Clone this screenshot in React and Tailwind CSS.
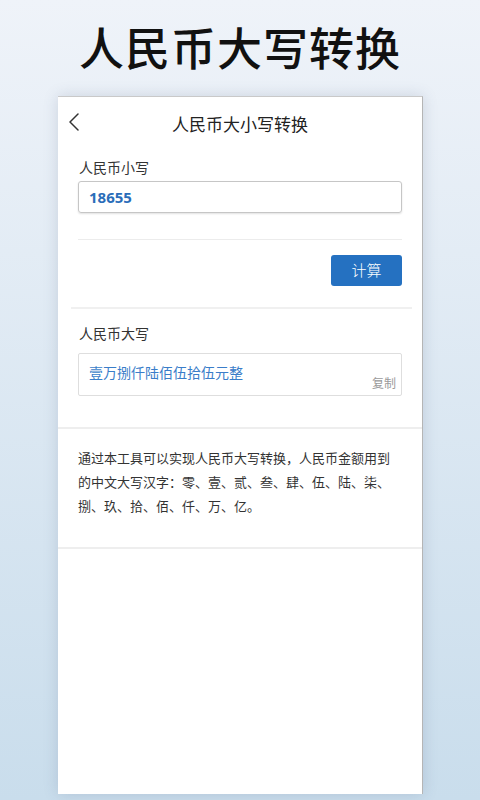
import React from "react";

const font = { fontFamily: '"Noto Sans CJK SC", "Noto Sans", sans-serif' };

export default function App() {
  return (
    <div
      className="w-[480px] h-[800px] overflow-hidden bg-gradient-to-b from-[#eff3f9] to-[#c9ddec] flex flex-col"
      style={font}
    >
      <div className="h-[96px] flex items-center justify-center">
        <h1 className="text-[45px] leading-none font-medium text-[#111] tracking-[1px] pb-[3px]">
          人民币大写转换
        </h1>
      </div>
      <div className="ml-[58px] w-[365px] h-[698px] bg-white border-t border-r border-t-[#c9c9c9] border-r-[#b5b5b5] shadow-[0_0_14px_rgba(60,80,110,0.18)] flex flex-col">
        <div className="h-[54px] relative flex items-center justify-center">
          <svg
            className="absolute left-[10px] top-[16px]"
            width="12"
            height="18"
            viewBox="0 0 12 18"
            fill="none"
          >
            <path d="M10 1 L2 9 L10 17" stroke="#333" strokeWidth="1.5" strokeLinecap="round" strokeLinejoin="round" />
          </svg>
          <span className="text-[17px] text-[#222]">人民币大小写转换</span>
        </div>
        <div className="px-[20px] pt-[6px]">
          <div className="text-[14px] leading-[20px] text-[#333] pl-px">人民币小写</div>
          <div className="mt-[4px] h-[32px] border border-[#c6c6c6] rounded-[3px] shadow-[0_1px_2px_rgba(0,0,0,0.12)] flex items-center pl-[10px]">
            <span className="text-[15px] font-bold text-[#2a6db9]" style={{ fontFamily: '"Noto Sans", "Liberation Sans", sans-serif' }}>18655</span>
          </div>
          <div className="mt-[26px] h-[1px] bg-[#ececec]" />
          <div className="mt-[15px] flex justify-end">
            <div className="w-[71px] h-[31px] rounded-[3px] bg-[#2571c1] flex items-center justify-center text-white text-[15px] font-light">
              计算
            </div>
          </div>
        </div>
        <div className="mt-[21px] ml-[13px] mr-[10px] h-[2px] bg-[#f0f0f0]" />
        <div className="px-[20px] pt-[14px]">
          <div className="text-[14px] leading-[20px] text-[#333] pl-px">人民币大写</div>
          <div className="mt-[10px] h-[43px] border border-[#dedede] rounded-[2px] relative pl-[10px] pt-[5px]">
            <span className="text-[14px] leading-[22px] text-[#3a7dc9]">壹万捌仟陆佰伍拾伍元整</span>
            <span className="absolute right-[5px] bottom-[4px] text-[12px] leading-[16px] text-[#9a9a9a]">复制</span>
          </div>
        </div>
        <div className="mt-[31px] h-[2px] bg-[#eeeeee]" />
        <div className="px-[20px] pt-[17px] pb-[29px] text-[13px] leading-[24px] text-[#333]">
          通过本工具可以实现人民币大写转换，人民币金额用到的中文大写汉字：零、壹、贰、叁、肆、伍、陆、柒、捌、玖、拾、佰、仟、万、亿。
        </div>
        <div className="h-[2px] bg-[#eeeeee]" />
      </div>
    </div>
  );
}
